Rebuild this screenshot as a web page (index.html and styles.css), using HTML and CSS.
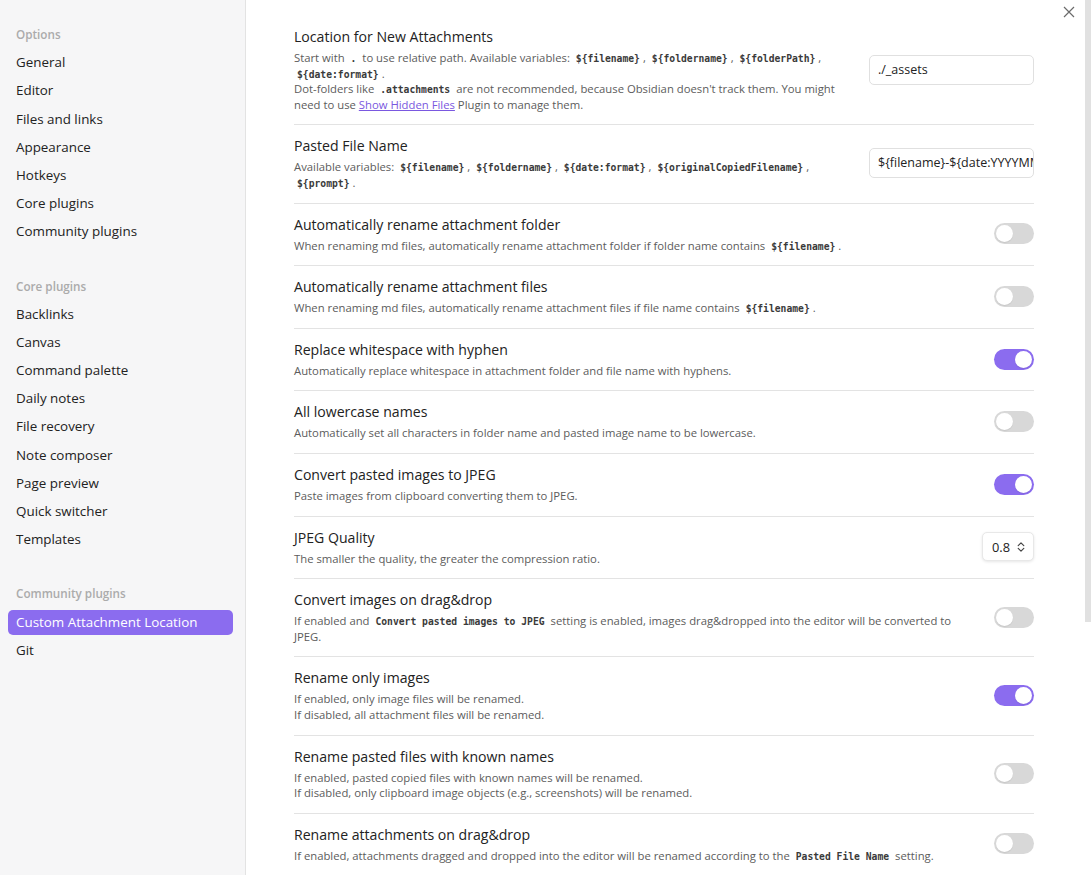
FILE: index.html
```html
<!DOCTYPE html>
<html lang="en">
<head>
<meta charset="utf-8">
<title>Settings</title>
<link rel="stylesheet" href="styles.css">
</head>
<body>
<div class="app">
  <nav class="sidebar">
    <div class="group">
      <div class="group-title">Options</div>
      <div class="nav-item">General</div>
      <div class="nav-item">Editor</div>
      <div class="nav-item">Files and links</div>
      <div class="nav-item">Appearance</div>
      <div class="nav-item">Hotkeys</div>
      <div class="nav-item">Core plugins</div>
      <div class="nav-item">Community plugins</div>
    </div>
    <div class="group">
      <div class="group-title">Core plugins</div>
      <div class="nav-item">Backlinks</div>
      <div class="nav-item">Canvas</div>
      <div class="nav-item">Command palette</div>
      <div class="nav-item">Daily notes</div>
      <div class="nav-item">File recovery</div>
      <div class="nav-item">Note composer</div>
      <div class="nav-item">Page preview</div>
      <div class="nav-item">Quick switcher</div>
      <div class="nav-item">Templates</div>
    </div>
    <div class="group">
      <div class="group-title">Community plugins</div>
      <div class="nav-item active">Custom Attachment Location</div>
      <div class="nav-item">Git</div>
    </div>
  </nav>

  <main class="content">
    <button class="close" aria-label="Close">
      <svg width="12" height="12" viewBox="0 0 12 12"><path d="M1 1 L11 11 M11 1 L1 11" stroke="#6b6b6b" stroke-width="1.2" fill="none"/></svg>
    </button>

    <div class="settings">
      <div class="setting">
        <div class="info">
          <div class="name">Location for New Attachments</div>
          <div class="desc">Start with <code>.</code> to use relative path. Available variables: <code>${filename}</code>, <code>${foldername}</code>, <code>${folderPath}</code>, <code>${date:format}</code>.<br>Dot-folders like <code>.attachments</code> are not recommended, because Obsidian doesn't track them. You might need to use <a class="link" href="#">Show Hidden Files</a> Plugin to manage them.</div>
        </div>
        <div class="control"><div class="text-input">./_assets</div></div>
      </div>

      <div class="setting">
        <div class="info">
          <div class="name">Pasted File Name</div>
          <div class="desc">Available variables: <code>${filename}</code>, <code>${foldername}</code>, <code>${date:format}</code>, <code>${originalCopiedFilename}</code>, <code>${prompt}</code>.</div>
        </div>
        <div class="control"><div class="text-input">${filename}-${date:YYYYMMDDHHmmssSSS}</div></div>
      </div>

      <div class="setting">
        <div class="info">
          <div class="name">Automatically rename attachment folder</div>
          <div class="desc">When renaming md files, automatically rename attachment folder if folder name contains <code>${filename}</code>.</div>
        </div>
        <div class="control"><div class="toggle"></div></div>
      </div>

      <div class="setting">
        <div class="info">
          <div class="name">Automatically rename attachment files</div>
          <div class="desc">When renaming md files, automatically rename attachment files if file name contains <code>${filename}</code>.</div>
        </div>
        <div class="control"><div class="toggle"></div></div>
      </div>

      <div class="setting">
        <div class="info">
          <div class="name">Replace whitespace with hyphen</div>
          <div class="desc">Automatically replace whitespace in attachment folder and file name with hyphens.</div>
        </div>
        <div class="control"><div class="toggle on"></div></div>
      </div>

      <div class="setting">
        <div class="info">
          <div class="name">All lowercase names</div>
          <div class="desc">Automatically set all characters in folder name and pasted image name to be lowercase.</div>
        </div>
        <div class="control"><div class="toggle"></div></div>
      </div>

      <div class="setting">
        <div class="info">
          <div class="name">Convert pasted images to JPEG</div>
          <div class="desc">Paste images from clipboard converting them to JPEG.</div>
        </div>
        <div class="control"><div class="toggle on"></div></div>
      </div>

      <div class="setting">
        <div class="info">
          <div class="name">JPEG Quality</div>
          <div class="desc">The smaller the quality, the greater the compression ratio.</div>
        </div>
        <div class="control">
          <div class="dropdown">0.8
            <svg class="chev" width="8" height="12" viewBox="0 0 8 12"><path d="M1.2 4.6 L4 1.8 L6.8 4.6 M1.2 7.4 L4 10.2 L6.8 7.4" stroke="#444" stroke-width="1.2" fill="none" stroke-linecap="round" stroke-linejoin="round"/></svg>
          </div>
        </div>
      </div>

      <div class="setting">
        <div class="info">
          <div class="name">Convert images on drag&amp;drop</div>
          <div class="desc">If enabled and <code>Convert pasted images to JPEG</code> setting is enabled, images drag&amp;dropped into the editor will be converted to JPEG.</div>
        </div>
        <div class="control"><div class="toggle"></div></div>
      </div>

      <div class="setting">
        <div class="info">
          <div class="name">Rename only images</div>
          <div class="desc">If enabled, only image files will be renamed.<br>If disabled, all attachment files will be renamed.</div>
        </div>
        <div class="control"><div class="toggle on"></div></div>
      </div>

      <div class="setting">
        <div class="info">
          <div class="name">Rename pasted files with known names</div>
          <div class="desc">If enabled, pasted copied files with known names will be renamed.<br>If disabled, only clipboard image objects (e.g., screenshots) will be renamed.</div>
        </div>
        <div class="control"><div class="toggle"></div></div>
      </div>

      <div class="setting">
        <div class="info">
          <div class="name">Rename attachments on drag&amp;drop</div>
          <div class="desc">If enabled, attachments dragged and dropped into the editor will be renamed according to the <code>Pasted File Name</code> setting.</div>
        </div>
        <div class="control"><div class="toggle"></div></div>
      </div>
    </div>

    <div class="scroll-thumb"></div>
  </main>
</div>
</body>
</html>
```

FILE: styles.css
```css
* { box-sizing: border-box; }

html, body {
  margin: 0;
  padding: 0;
  height: 875px;
  overflow: hidden;
  background: #ffffff;
  font-family: "Open Sans", "Noto Sans", sans-serif;
  color: #222222;
}

.app {
  display: flex;
  height: 875px;
}

/* Sidebar */
.sidebar {
  width: 246px;
  flex: 0 0 246px;
  background: #f6f6f7;
  border-right: 1px solid #e3e3e3;
  padding: 22px 12px 0 8px;
  display: flex;
  flex-direction: column;
  gap: 29px;
}

.group {
  display: flex;
  flex-direction: column;
  gap: 3px;
}

.group-title {
  height: 25.2px;
  line-height: 25px;
  padding: 0 8px;
  font-size: 11.7px;
  font-weight: 600;
  color: #ababab;
}

.nav-item {
  height: 25.2px;
  line-height: 25px;
  padding: 0 8px;
  font-size: 13.4px;
  color: #222222;
  border-radius: 5px;
  white-space: nowrap;
}

.nav-item.active {
  background: #8b6cef;
  color: #ffffff;
}

/* Content */
.content {
  position: relative;
  flex: 1 1 auto;
  overflow: hidden;
  padding: 16px 57px 0 48px;
}

.close {
  position: absolute;
  top: 5px;
  right: 15px;
  width: 14px;
  height: 14px;
  padding: 0;
  margin: 0;
  border: none;
  background: transparent;
  display: flex;
  align-items: center;
  justify-content: center;
}

.scroll-thumb {
  position: absolute;
  top: 0;
  right: 0;
  width: 6px;
  height: 622px;
  background: #e1e1e1;
}

.settings {
  display: flex;
  flex-direction: column;
}

.setting {
  display: flex;
  align-items: center;
  padding: 11px 0 12px;
  border-top: 1px solid #e3e3e3;
}

.setting:first-child {
  border-top: none;
}

.info {
  flex: 1 1 auto;
  min-width: 0;
  margin-right: 24px;
}

.name {
  font-size: 14.1px;
  line-height: 20px;
  color: #222222;
}

.desc {
  margin-top: 3px;
  font-size: 11.3px;
  line-height: 15.6px;
  color: #5c5c5c;
}

code {
  font-family: "DejaVu Sans Mono", "Liberation Mono", monospace;
  font-size: 9.7px;
  line-height: 1;
  font-weight: bold;
  color: #3a3a3a;
  padding: 0 3px;
}

.link {
  color: #7a58e0;
  text-decoration: underline;
}

.control {
  flex: 0 0 auto;
  display: flex;
  justify-content: flex-end;
  align-items: center;
}

.text-input {
  width: 165px;
  height: 30px;
  border: 1px solid #e0e0e0;
  border-radius: 5px;
  padding: 0 8px;
  font-size: 12.5px;
  line-height: 28px;
  color: #222222;
  white-space: nowrap;
  overflow: hidden;
  background: #ffffff;
}

.toggle {
  position: relative;
  width: 40px;
  height: 21px;
  border-radius: 11px;
  background: #d8d8d8;
}

.toggle::after {
  content: "";
  position: absolute;
  top: 2px;
  left: 2px;
  width: 17px;
  height: 17px;
  border-radius: 50%;
  background: #ffffff;
  box-shadow: 0 1px 1px rgba(0,0,0,0.08);
}

.toggle.on {
  background: #8b6cef;
}

.toggle.on::after {
  left: 21px;
}

.dropdown {
  width: 52px;
  height: 29px;
  border-radius: 5px;
  background: #ffffff;
  border: 1px solid #e8e8e8;
  box-shadow: 0 1px 3px rgba(0,0,0,0.10);
  display: flex;
  align-items: center;
  padding: 0 0 0 9px;
  gap: 7px;
  font-size: 12.8px;
  color: #222222;
}
```
